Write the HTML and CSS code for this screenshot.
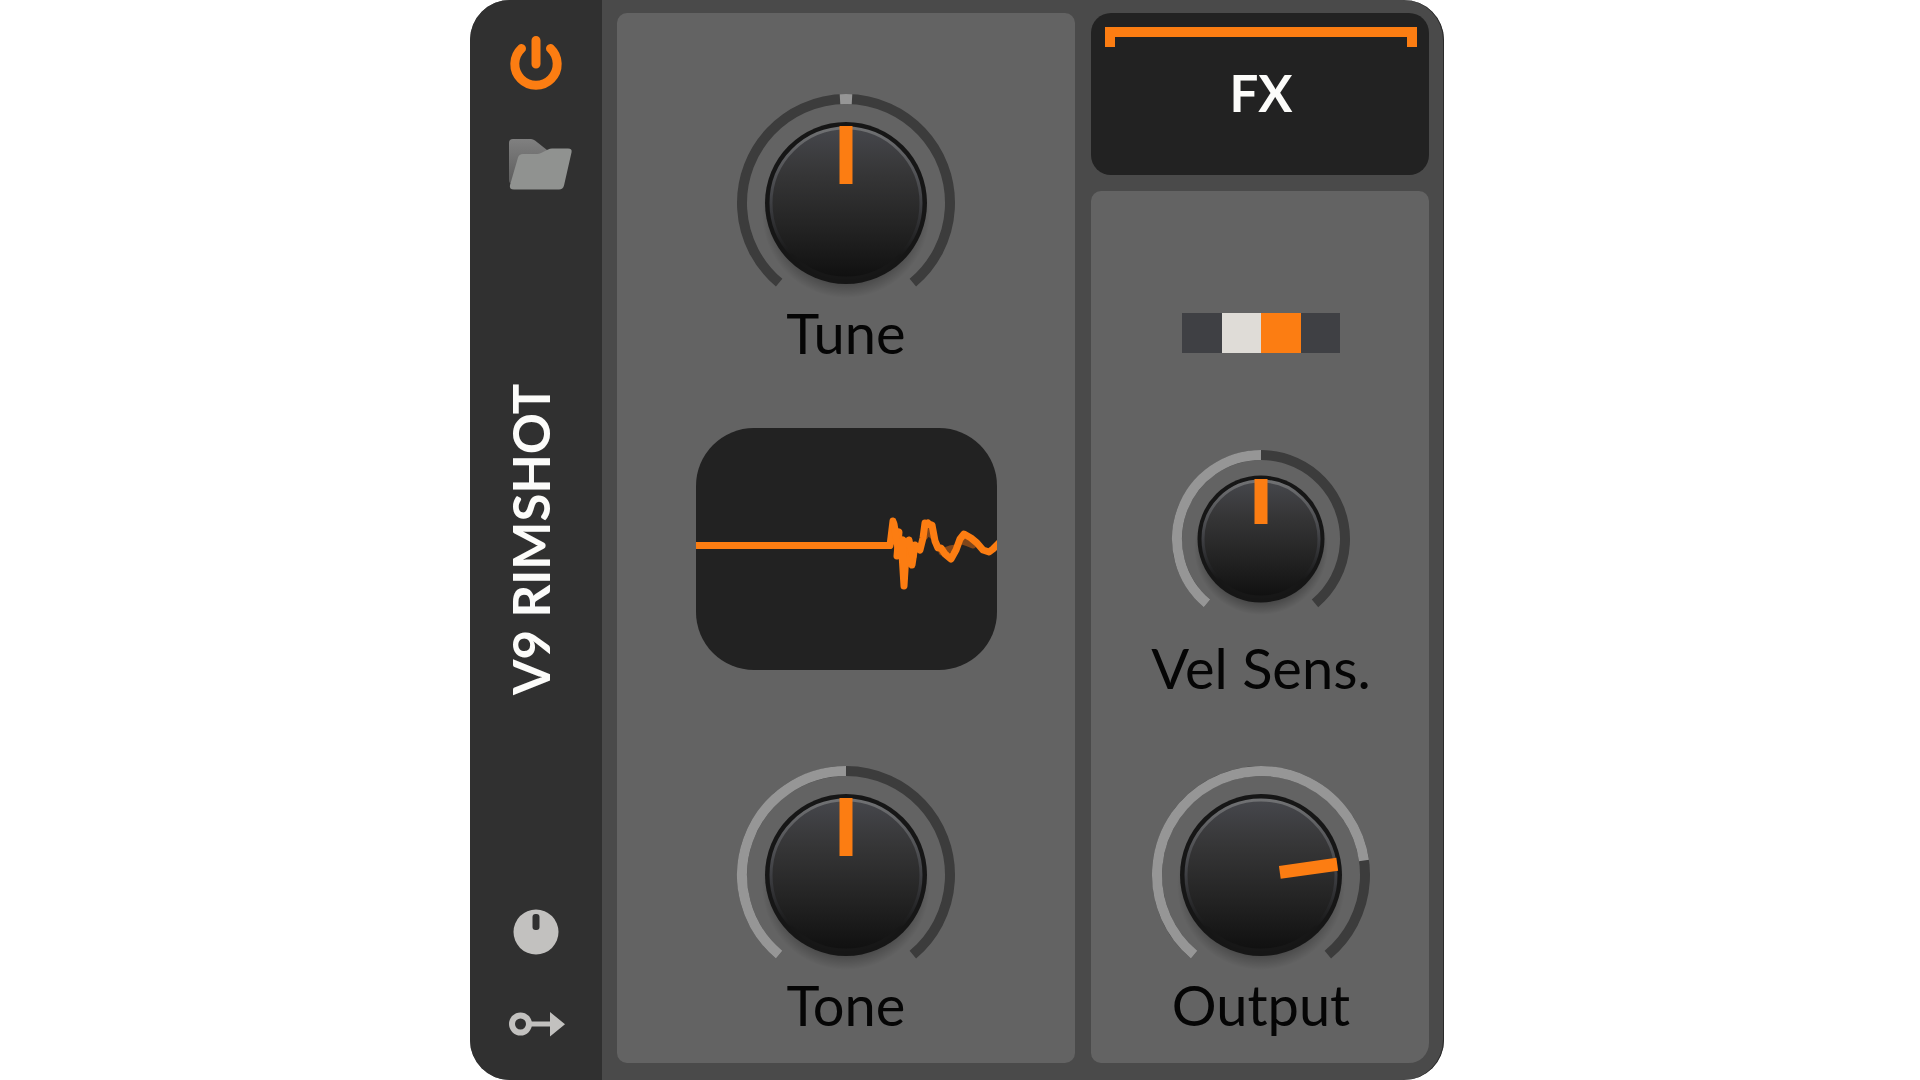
FILE: index.html
```
<!DOCTYPE html>
<html lang="en">
<head>
  <meta charset="UTF-8">
  <meta name="viewport" content="width=device-width, initial-scale=1.0">
  <title>V9 Rimshot</title>
  <link rel="stylesheet" href="styles.css">
</head>
<body>
  <!-- Shared gradients -->
  <svg class="defs" width="0" height="0" aria-hidden="true">
    <defs>
      <linearGradient id="cap" x1="0" y1="0" x2="0" y2="1">
        <stop offset="0" stop-color="#46474c"/>
        <stop offset="0.3" stop-color="#363637"/>
        <stop offset="0.65" stop-color="#242424"/>
        <stop offset="0.88" stop-color="#171717"/>
        <stop offset="1" stop-color="#101010"/>
      </linearGradient>
      <linearGradient id="rim" x1="0" y1="0" x2="0" y2="1">
        <stop offset="0" stop-color="#707173"/>
        <stop offset="0.5" stop-color="#3e3f43"/>
        <stop offset="0.85" stop-color="#171717"/>
      </linearGradient>
      <radialGradient id="shadow">
        <stop offset="0.8" stop-color="#000" stop-opacity="0.3"/>
        <stop offset="1" stop-color="#000" stop-opacity="0"/>
      </radialGradient>
      <linearGradient id="folderBack" x1="0" y1="0" x2="0" y2="1">
        <stop offset="0" stop-color="#808080"/>
        <stop offset="1" stop-color="#5c5c5c"/>
      </linearGradient>
    </defs>
  </svg>

  <main class="device">
    <aside class="side">
      <button type="button" class="icon-button" aria-label="Power">
        <svg viewBox="0 0 64 64">
          <path class="power" d="M17.500 18.500A21.200 21.200 0 1 0 46.500 18.500M32 10.500V34"/>
        </svg>
      </button>
      <button type="button" class="icon-button" aria-label="Browse presets">
        <svg viewBox="0 0 64 64">
          <path fill="url(#folderBack)" d="M5 11q0-4 4-4h18q2 0 4 1.500l12 9.500-7 34H9q-4 0-4-4z"/>
          <path fill="#909290" d="M14 25.500q1-3.500 5-3.500h14q2 0 4-1l7-3.500q2-1 4-1h16q4.500 0 3.500 4l-7.500 33q-1 4-5 4H10q-5 0-4-4.500z"/>
        </svg>
      </button>
      <h1 class="title">V9 RIMSHOT</h1>
      <button type="button" class="icon-button" aria-label="Remote controls">
        <svg viewBox="0 0 64 64">
          <circle cx="32" cy="32" r="22.500" fill="#c2c1bf"/>
          <rect x="28.500" y="14" width="7" height="16" rx="3" fill="#303030"/>
        </svg>
      </button>
      <button type="button" class="icon-button" aria-label="Modulators">
        <svg viewBox="0 0 64 64">
          <circle cx="16.500" cy="32" r="8.500" fill="none" stroke="#c2c1bf" stroke-width="6"/>
          <path fill="#c2c1bf" d="M25 29.500h21V20l15 12.300L46 44.500v-10H25z"/>
        </svg>
      </button>
    </aside>

    <div class="panels">
      <section class="panel panel-main">
        <label class="knob">
          <span class="dial">
            <svg viewBox="-110 -110 220 207">
              <path class="track" d="M-66.850 79.670A104 104 0 1 1 66.850 79.670"/>
              <path class="value" d="M-6-103.800A104 104 0 0 1 6-103.800"/>
              <circle cy="11" r="84" fill="url(#shadow)"/>
              <circle r="81" fill="#161616"/>
              <circle r="75" fill="url(#cap)" stroke="url(#rim)" stroke-width="3"/>
              <rect class="pointer" x="-6.500" y="-77" width="13" height="58"/>
            </svg>
            <input type="range" min="-50" max="50" value="0">
          </span>
          <span class="knob-name">Tune</span>
        </label>

        <div class="screen">
          <svg viewBox="0 0 301 242" role="img" aria-label="Waveform">
            <path class="wave-tail" d="M229 108L232 103L237 108M246 124L254 121L260 120M266 113L272 115L277 117"/>
            <path class="wave" d="M0 117.500H194L197 93L199 113L203 104L201 128L206 126L208 158L210 126L213 112L216 137L219 117L224 122L227 110L229 95L236 97L239 113L242 120L245 120L249 126L255 131L260 122L264 111L268 106L275 110L281 115L287 122L293 124L297 121L303 115"/>
            <path class="wave" d="M198 96L202 120L207 112L208 150M213 114L217 128M230 97L232 95"/>
          </svg>
        </div>

        <label class="knob">
          <span class="dial">
            <svg viewBox="-110 -110 220 207">
              <path class="track" d="M-66.850 79.670A104 104 0 1 1 66.850 79.670"/>
              <path class="value" d="M-66.850 79.670A104 104 0 0 1 0-104"/>
              <circle cy="11" r="84" fill="url(#shadow)"/>
              <circle r="81" fill="#161616"/>
              <circle r="75" fill="url(#cap)" stroke="url(#rim)" stroke-width="3"/>
              <rect class="pointer" x="-6.500" y="-77" width="13" height="58"/>
            </svg>
            <input type="range" min="0" max="100" value="50">
          </span>
          <span class="knob-name">Tone</span>
        </label>
      </section>

      <div class="column">
        <button type="button" class="fx">
          <span class="bracket"></span>
          <span>FX</span>
        </button>

        <section class="panel panel-out">
          <div class="meter">
            <span></span>
            <span class="light"></span>
            <span class="on"></span>
            <span></span>
          </div>

          <label class="knob">
            <span class="dial dial-small">
              <svg viewBox="-90 -90 180 186">
                <path class="track" d="M-54 64.350A84 84 0 1 1 54 64.350"/>
                <path class="value" d="M-54 64.350A84 84 0 0 1 0-84"/>
                <circle cy="9" r="67" fill="url(#shadow)"/>
                <circle r="63.500" fill="#161616"/>
                <circle r="58" fill="url(#cap)" stroke="url(#rim)" stroke-width="3"/>
                <rect class="pointer" x="-6.500" y="-60" width="13" height="45"/>
              </svg>
              <input type="range" min="0" max="100" value="50">
            </span>
            <span class="knob-name">Vel Sens.</span>
          </label>

          <label class="knob">
            <span class="dial">
              <svg viewBox="-110 -110 220 207">
                <path class="track" d="M-66.850 79.670A104 104 0 1 1 66.850 79.670"/>
                <path class="value" d="M-66.850 79.670A104 104 0 1 1 102.990-14.470"/>
                <circle cy="11" r="84" fill="url(#shadow)"/>
                <circle r="81" fill="#161616"/>
                <circle r="75" fill="url(#cap)" stroke="url(#rim)" stroke-width="3"/>
                <rect class="pointer" x="-6.500" y="-77" width="13" height="58" transform="rotate(82)"/>
              </svg>
              <input type="range" min="0" max="100" value="79">
            </span>
            <span class="knob-name">Output</span>
          </label>
        </section>
      </div>
    </div>
  </main>
</body>
</html>
```
FILE: styles.css
```
* {
  box-sizing: border-box;
}
body {
  margin: 0;
  padding-right: 6px;
  background: #fff;
  font-family: Lato, "Open Sans", sans-serif;
}
svg {
  display: block;
}
.defs {
  position: absolute;
}
button {
  border: none;
  padding: 0;
  font-family: inherit;
  cursor: pointer;
}
.device {
  display: flex;
  max-width: 974px;
  min-height: 100vh;
  margin: 0 auto;
  background: #4a4a4a;
  border-radius: 40px;
  overflow: hidden;
  box-shadow: inset -1px 0 #2a2a2a;
}

/* Left strip */
.side {
  flex: none;
  display: flex;
  flex-direction: column;
  align-items: center;
  width: 132px;
  padding: 30px 0 24px;
  background: #303030;
}
.icon-button {
  width: 64px;
  height: 64px;
  background: none;
}
.icon-button svg {
  width: 64px;
  height: 64px;
  overflow: visible;
}
.icon-button + .icon-button {
  margin-top: 38px;
}
.title + .icon-button + .icon-button {
  margin-top: 28px;
}
.power {
  fill: none;
  stroke: #fc7d12;
  stroke-width: 9;
  stroke-linecap: round;
}
.title {
  flex: 1;
  display: flex;
  align-items: center;
  justify-content: center;
  margin: 0;
  padding: 18px 0 0 10px;
  color: #fcfcfa;
  font-size: 51px;
  line-height: 64px;
  font-weight: bold;
  writing-mode: vertical-rl;
  transform: rotate(180deg);
}

/* Panels */
.panels {
  flex: 1;
  display: grid;
  grid-template-columns: 458fr 338fr;
  gap: 16px;
  padding: 13px 15px 17px;
}
.column {
  display: flex;
  flex-direction: column;
  gap: 16px;
}
.panel {
  display: flex;
  flex-direction: column;
  align-items: center;
  background: #636363;
  border-radius: 10px;
}
.panel-main {
  padding: 80px 0 25px;
}
.panel-out {
  flex: 1;
  padding: 122px 0 25px 2px;
  border-bottom-right-radius: 20px;
}
.fx {
  display: flex;
  flex-direction: column;
  align-items: center;
  height: 162px;
  padding: 14px 12px 0 14px;
  background: #222;
  border-radius: 20px;
  color: #fcfcfa;
  font-size: 51px;
  line-height: 64px;
  font-weight: bold;
}
.bracket {
  width: 100%;
  height: 20px;
  margin-bottom: 14px;
  background: linear-gradient(#fc7d12, #fc7d12) top / 100% 10px no-repeat;
  border: solid #fc7d12;
  border-width: 0 10px;
}

/* Knobs */
.knob {
  display: flex;
  flex-direction: column;
  align-items: center;
}
.dial {
  position: relative;
  width: 220px;
}
.dial-small {
  width: 180px;
}
.dial input {
  position: absolute;
  inset: 0;
  width: 100%;
  height: 100%;
  margin: 0;
  opacity: 0;
  cursor: pointer;
}
.knob-name {
  color: #050505;
  font-size: 56px;
  line-height: 66px;
}
.track,
.value {
  fill: none;
  stroke: #3c3c3c;
  stroke-width: 10;
}
.value {
  stroke: #969696;
}
.pointer {
  fill: #fc7d12;
}
.screen {
  width: 301px;
  margin: 62px 0 95px;
  background: #222;
  border-radius: 58px;
  overflow: hidden;
}
.wave,
.wave-tail {
  fill: none;
  stroke: #fc7d12;
  stroke-width: 7;
  stroke-linejoin: round;
  stroke-linecap: round;
}
.wave-tail {
  stroke: #80461a;
}
.meter {
  display: flex;
  width: 158px;
  height: 40px;
  margin-bottom: 96px;
}
.meter span {
  flex: 1;
  background: #3f4044;
}
.meter .light {
  background: #dfdcd7;
}
.meter .on {
  background: #fc7d12;
}
.panel-out .knob + .knob {
  margin-top: 64px;
}
```
